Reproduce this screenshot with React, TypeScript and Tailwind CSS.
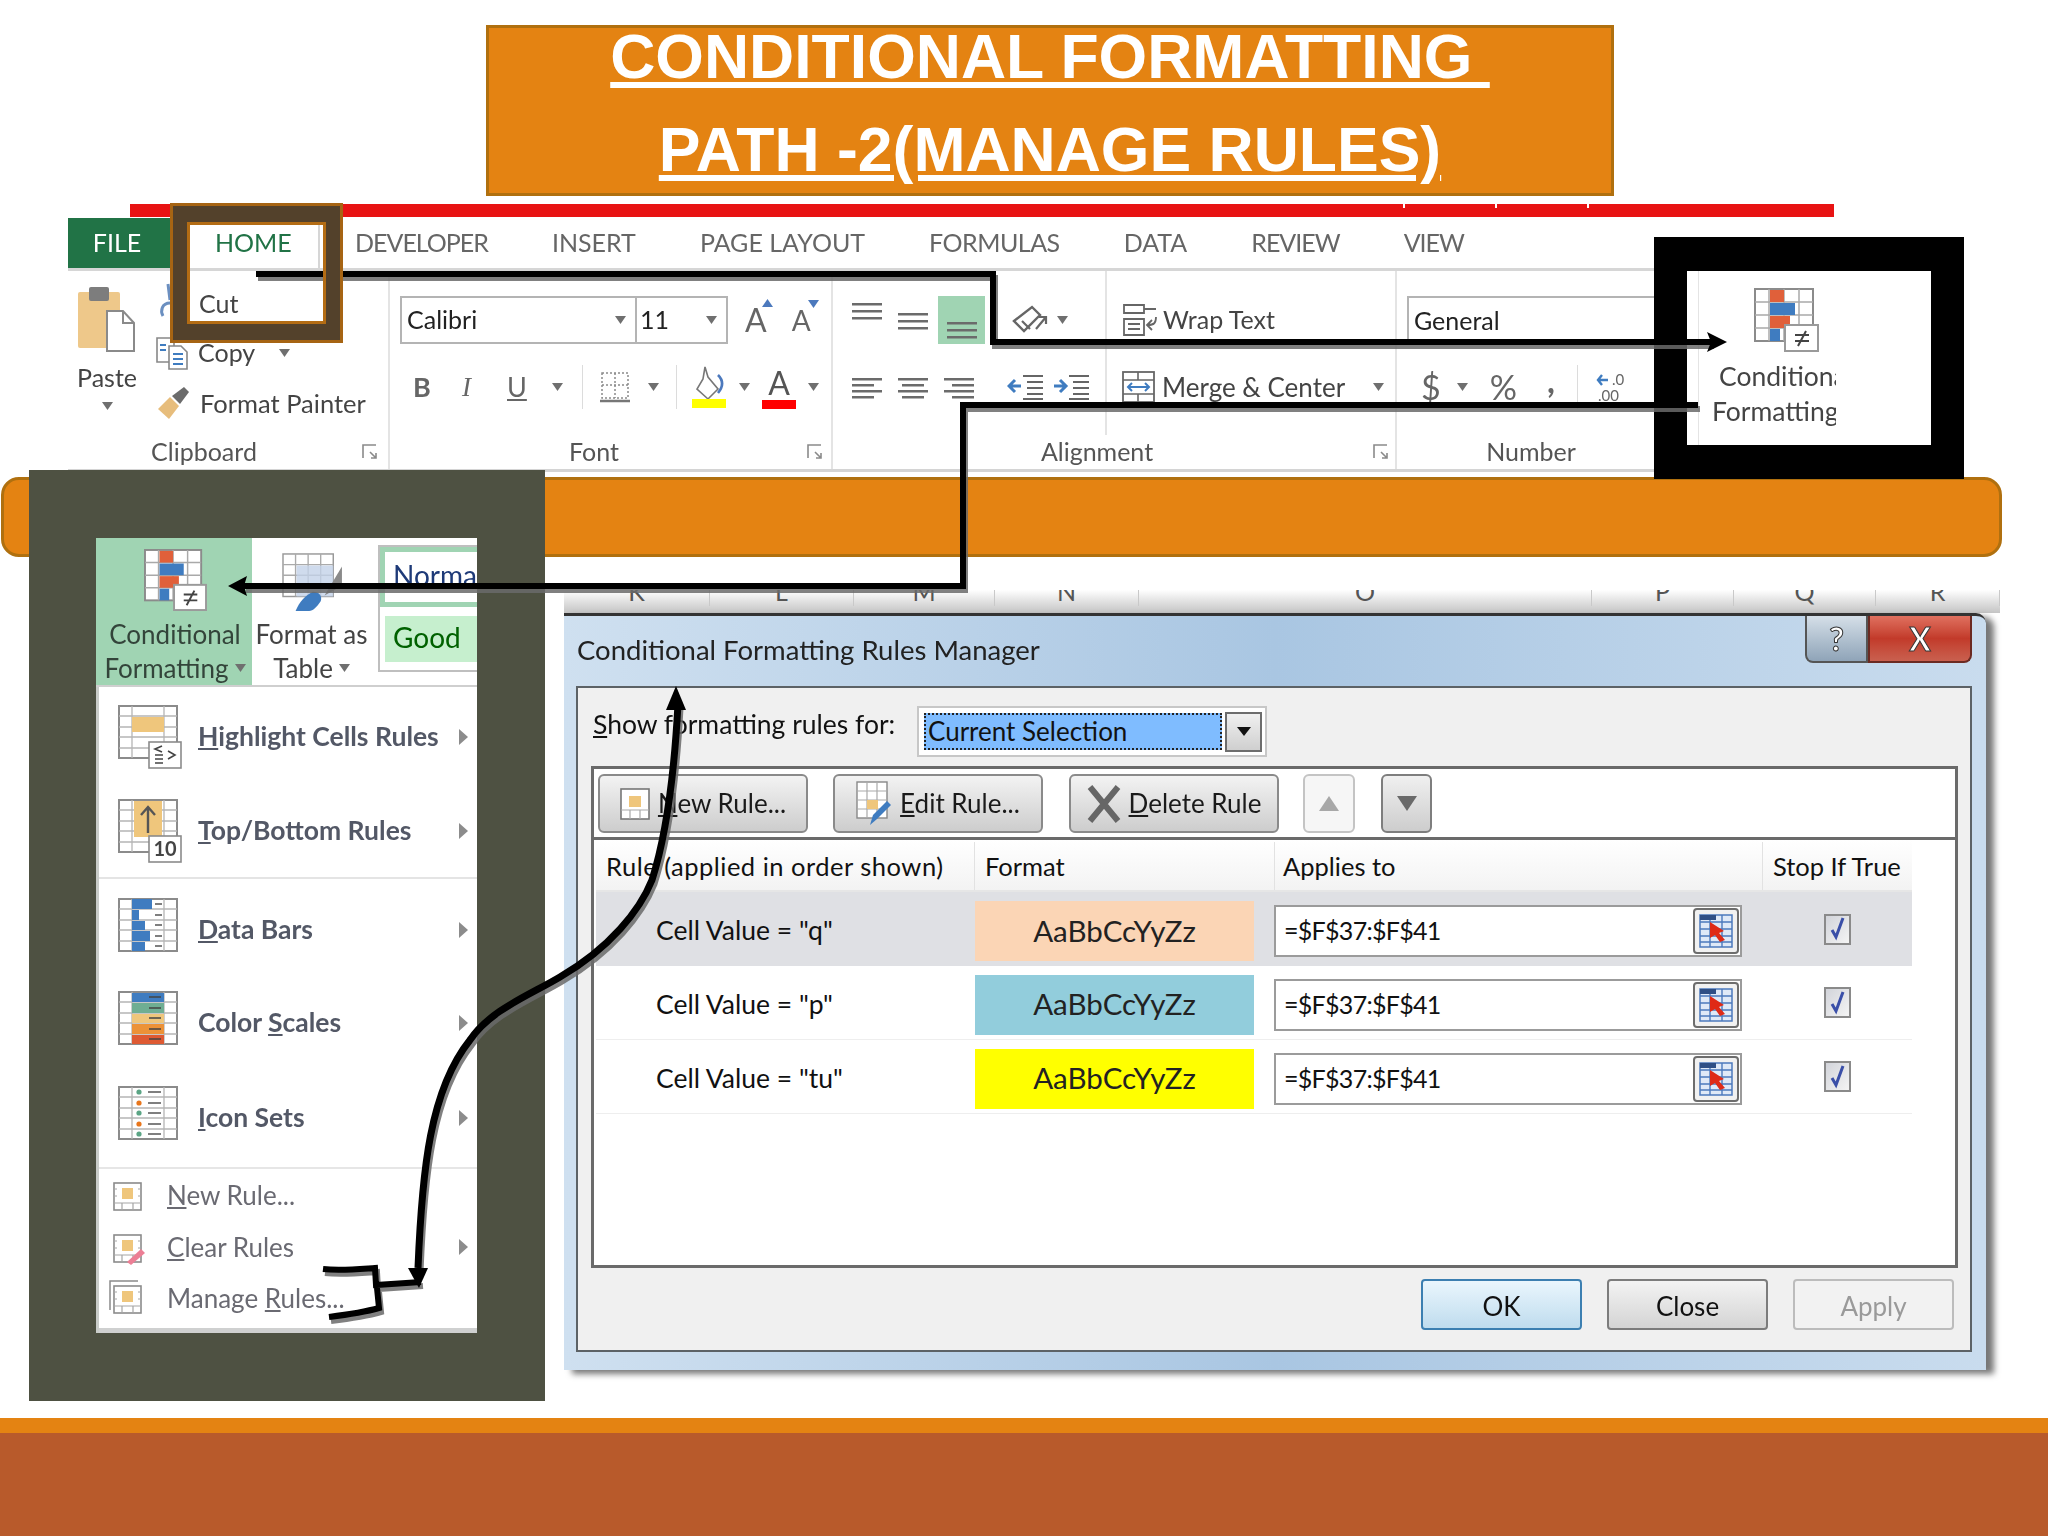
import type { ReactNode } from 'react'

const Tri = ({ className = '' }: { className?: string }) => (
  <svg width="11" height="8" viewBox="0 0 11 8" className={className}>
    <path d="M0 0h11L5.5 8z" fill="#6f6f6f" />
  </svg>
)

const SubArrow = () => (
  <svg width="9" height="16" viewBox="0 0 9 16" className="ml-auto mr-[9px] shrink-0">
    <path d="M0 0l9 8-9 8z" fill="#8c8c8c" />
  </svg>
)

const Launcher = ({ className = '' }: { className?: string }) => (
  <svg width="16" height="16" viewBox="0 0 16 16" className={className}>
    <path d="M1 14V1h13M8 8l6 6M9 14h5V9" fill="none" stroke="#8a8a8a" strokeWidth="1.6" />
  </svg>
)

// three or more short bars, used by all alignment buttons
const Lines = ({ rows, width = 30 }: { rows: [number, number, number][]; width?: number }) => (
  <svg width={width} height="30" viewBox={`0 0 ${width} 30`}>
    {rows.map(([x, y, w], i) => (
      <rect key={i} x={x} y={y} width={w} height="2.5" fill="#6b6b6b" />
    ))}
  </svg>
)

const CfIcon = () => (
  <svg width="65" height="64" viewBox="0 0 65 64">
    <rect x="1" y="1" width="58" height="52" fill="#fff" stroke="#8b8b8b" strokeWidth="2" />
    <path d="M15 1v52M30 1v52M45 1v52M1 14h58M1 27h58M1 40h58" stroke="#a9a9a9" strokeWidth="1.5" />
    <rect x="16" y="2" width="14" height="12" fill="#e0603a" />
    <rect x="16" y="15" width="25" height="12" fill="#3f7cc0" />
    <rect x="16" y="28" width="20" height="12" fill="#e0603a" />
    <rect x="16" y="41" width="10" height="12" fill="#3f7cc0" />
    <rect x="31" y="37" width="33" height="26" fill="#fff" stroke="#9a9a9a" strokeWidth="2" />
    <path d="M41 47h14M41 53h14M52 43l-8 15" stroke="#444" strokeWidth="2" fill="none" />
  </svg>
)

const GridBase = ({ children }: { children?: ReactNode }) => (
  <>
    <rect x="1" y="1" width="58" height="52" fill="#fff" stroke="#8b8b8b" strokeWidth="2" />
    <path d="M14 1v52M46 1v52M1 11h58M1 22h58M1 32h58M1 43h58" stroke="#b5b5b5" strokeWidth="1.3" />
    {children}
  </>
)

const MenuIcon = ({ kind }: { kind: string }) => (
  <svg width="64" height="64" viewBox="0 0 64 64" className="shrink-0">
    {kind === 'highlight' && (
      <GridBase>
        <rect x="14" y="12" width="32" height="15" fill="#efc67c" />
        <rect x="31" y="37" width="32" height="26" fill="#fff" stroke="#8b8b8b" strokeWidth="1.6" />
        <path d="M44 41l-7 3 7 3M37 50h8M37 54h8M37 58h8M50 46l7 4-7 4" fill="none" stroke="#444" strokeWidth="1.6" />
      </GridBase>
    )}
    {kind === 'top' && (
      <GridBase>
        <rect x="16" y="2" width="28" height="36" fill="#efc67c" />
        <path d="M30 34V8M23 16l7-8 7 8" stroke="#555" strokeWidth="2.4" fill="none" />
        <rect x="31" y="37" width="32" height="26" fill="#fff" stroke="#8b8b8b" strokeWidth="1.6" />
        <text x="47" y="57" textAnchor="middle" fontSize="20" fill="#444">10</text>
      </GridBase>
    )}
    {kind === 'bars' && (
      <GridBase>
        <rect x="14" y="1" width="20" height="10" fill="#3f7cc0" />
        <rect x="14" y="12" width="7" height="10" fill="#3f7cc0" />
        <rect x="14" y="23" width="13" height="9" fill="#3f7cc0" />
        <rect x="14" y="33" width="18" height="10" fill="#3f7cc0" />
        <rect x="14" y="44" width="13" height="9" fill="#3f7cc0" />
        <path d="M37 6h7M37 17h7M37 27h7M37 38h7M37 48h7" stroke="#555" strokeWidth="1.6" />
      </GridBase>
    )}
    {kind === 'scales' && (
      <GridBase>
        <rect x="14" y="2" width="32" height="9" fill="#3f7cc0" />
        <rect x="14" y="12" width="32" height="10" fill="#6fae93" />
        <rect x="14" y="23" width="32" height="9" fill="#efc67c" />
        <rect x="14" y="33" width="32" height="10" fill="#ec9238" />
        <rect x="14" y="44" width="32" height="9" fill="#de5a33" />
        <path d="M31 6h12M31 17h12M31 27h12M31 38h12M31 48h12" stroke="#444" strokeWidth="1.6" />
      </GridBase>
    )}
    {kind === 'sets' && (
      <GridBase>
        <circle cx="21" cy="6" r="2.6" fill="#5ba585" />
        <circle cx="21" cy="17" r="2.6" fill="#e8761c" />
        <circle cx="21" cy="27" r="2.6" fill="#5ba585" />
        <circle cx="21" cy="38" r="2.6" fill="#e8761c" />
        <circle cx="21" cy="48" r="2.6" fill="#5ba585" />
        <path d="M30 6h13M30 17h13M30 27h13M30 38h13M30 48h13" stroke="#555" strokeWidth="1.6" />
      </GridBase>
    )}
  </svg>
)

const SmallRuleIcon = ({ kind = 'new' }: { kind?: string }) => (
  <svg width="36" height="36" viewBox="0 0 36 36" className="shrink-0">
    {kind === 'manage' && <path d="M1 30V1h28" fill="none" stroke="#8b8b8b" strokeWidth="1.5" />}
    <rect x="5" y="6" width="27" height="27" fill="#fff" stroke="#8b8b8b" strokeWidth="1.6" />
    <path d="M5 26h27M13 26v7M24 26v7M5 12h3M29 12h3M5 19h3M29 19h3" stroke="#a5a5a5" strokeWidth="1.2" />
    <rect x="13" y="11" width="11" height="11" fill="#efc67c" />
    {kind === 'clear' && <path d="M18 33l14-13 4 4-14 12z" fill="#ec7f95" />}
  </svg>
)

const RangeButton = () => (
  <div className="flex h-[46px] w-[46px] shrink-0 items-center justify-center rounded-[4px] border-2 border-[#6d6d6d] bg-[#f1f1f1]">
    <svg width="34" height="34" viewBox="0 0 34 34">
      <rect x="1" y="1" width="32" height="32" fill="#dfe9f7" stroke="#4c79bd" strokeWidth="1.5" />
      <path d="M1 8h32M1 15h32M1 22h32M1 28h32M11 1v32M23 1v32" stroke="#4c79bd" strokeWidth="1.4" />
      <rect x="1" y="1" width="16" height="5" fill="#2f4f85" />
      <path d="M11 8l14 9-5 2 6 7-5 2-5-7-5 3z" fill="#df2a16" />
    </svg>
  </div>
)

const Check = () => (
  <div className="-mt-[4px] flex h-[31px] w-[27px] items-center justify-center border-2 border-[#8a8a8a] bg-gradient-to-br from-[#d2d4da] to-[#f4f4f4]">
    <svg width="19" height="26" viewBox="0 0 19 26">
      <path d="M4 14l4 7L15 2" fill="none" stroke="#3a4fa8" strokeWidth="3" />
    </svg>
  </div>
)

const DlgButton = ({ children, icon }: { children: ReactNode; icon: ReactNode }) => (
  <div className="flex h-[59px] w-[210px] items-center justify-center gap-[8px] rounded-[6px] border-2 border-[#8a8a8a] bg-gradient-to-b from-[#f3f3f3] to-[#cdcdcd] text-[26px] text-[#1a1a1a]">
    {icon}
    <span>{children}</span>
  </div>
)

const FootButton = ({ label, tone }: { label: string; tone: string }) => (
  <div
    className={
      tone === 'ok'
        ? 'flex h-[51px] w-[161px] items-center justify-center rounded-[4px] border-2 border-[#3c7fb1] bg-gradient-to-b from-[#eaf6fd] to-[#bfdcee] pt-[3px] text-[26px] text-[#111]'
        : tone === 'off'
          ? 'flex h-[51px] w-[161px] items-center justify-center rounded-[4px] border-2 border-[#bcbcbc] bg-[#f2f2f2] pt-[3px] text-[26px] text-[#9a9a9a]'
          : 'flex h-[51px] w-[161px] items-center justify-center rounded-[4px] border-2 border-[#7c7c7c] bg-gradient-to-b from-[#f3f3f3] to-[#d4d4d4] pt-[3px] text-[26px] text-[#111]'
    }
  >
    {label}
  </div>
)

// Calibri's capitals run at different widths from Lato's, so each tab gets its own tracking
const tabs: [string, string][] = [
  ['DEVELOPER', 'tracking-[-1px]'],
  ['INSERT', 'tracking-[0px]'],
  ['PAGE LAYOUT', 'tracking-[0px]'],
  ['FORMULAS', 'tracking-[-0.5px]'],
  ['DATA', 'tracking-[0px]'],
  ['REVIEW', 'tracking-[-1px]'],
  ['VIEW', 'tracking-[-1px]'],
]

const Ribbon = () => (
  <div className="absolute left-[68px] top-[217px] flex h-[258px] w-[1600px] flex-col text-[25px] text-[#444] blur-[0.5px]">
    <div className="flex h-[54px] shrink-0 border-b-[3px] border-[#d6d6d6] pt-[1px]">
      <div className="flex w-[108px] items-center justify-center bg-[#217346] pr-[10px] text-white">FILE</div>
      <div className="flex w-[144px] items-center border-r-2 border-[#d6d6d6] pl-[39px] text-[#217346]">HOME</div>
      <div className="flex items-center gap-[64px] pl-[35px] text-[#666]">
        {tabs.map(([t, tr]) => (
          <span key={t} className={tr}>{t}</span>
        ))}
      </div>
    </div>
    <div className="flex h-[201px] border-b-[3px] border-[#d4d4d4]">
      {/* clipboard */}
      <div className="flex w-[322px] shrink-0 flex-col border-r-2 border-[#e4e4e4]">
        <div className="flex h-[164px] pt-[14px]">
          <div className="mr-[10px] flex w-[78px] flex-col items-center">
            <svg width="60" height="68" viewBox="0 0 60 68">
              <rect x="1" y="7" width="42" height="56" rx="2" fill="#eec88a" />
              <rect x="12" y="2" width="20" height="14" rx="2" fill="#7d7d7d" />
              <path d="M30 26h16l11 12v28H30z" fill="#fff" stroke="#8a8a8a" strokeWidth="2" />
              <path d="M46 26v12h11" fill="none" stroke="#8a8a8a" strokeWidth="2" />
            </svg>
            <span className="mt-[9px] leading-[30px]">Paste</span>
            <Tri className="mt-[10px]" />
          </div>
          <div className="-mt-[6px] flex flex-col">
            <div className="flex h-[50px] items-center pl-[43px]">Cut</div>
            <div className="-mt-[1px] flex h-[50px] items-center gap-[9px]">
              <svg width="34" height="34" viewBox="0 0 34 34" className="-ml-[1px]">
                <path d="M2 2h14l3 4v20H2z" fill="#fff" stroke="#888" strokeWidth="1.6" />
                <path d="M14 10h12l6 6v17H14z" fill="#fff" stroke="#888" strokeWidth="1.6" />
                <path d="M18 18h10M18 23h10M18 28h10M5 9h6M5 14h6" stroke="#3f7cc0" strokeWidth="2" />
              </svg>
              <span>Copy</span>
              <Tri className="ml-[15px]" />
            </div>
            <div className="flex h-[50px] items-center gap-[8px]">
              <svg width="36" height="36" viewBox="0 0 36 36">
                <path d="M2 24l12-12 9 9-10 13z" fill="#e7bd7c" />
                <path d="M16 11l12-9 5 5-9 12z" fill="#6b6b6b" />
              </svg>
              <span className="text-[25.5px]">Format Painter</span>
            </div>
          </div>
        </div>
        <div className="flex h-[33px] items-center pt-[1px]">
          <span className="w-[272px] text-center text-[#555]">Clipboard</span>
          <Launcher className="ml-[22px]" />
        </div>
      </div>
      {/* font */}
      <div className="flex w-[443px] shrink-0 flex-col border-r-2 border-[#e4e4e4]">
        <div className="flex h-[164px] flex-col pl-[10px] pt-[25px]">
          <div className="flex items-center">
            <div className="flex h-[48px] w-[237px] items-center justify-between border-2 border-[#b4b4b4] pl-[5px] pr-[9px] text-[#222]">
              Calibri
              <Tri />
            </div>
            <div className="-ml-[2px] flex h-[48px] w-[93px] items-center justify-between border-2 border-[#b4b4b4] pl-[3px] pr-[9px] text-[#222]">
              11
              <Tri />
            </div>
            <span className="relative ml-[17px] text-[32px] leading-none text-[#666]">
              A
              <svg width="11" height="8" viewBox="0 0 11 8" className="absolute -right-[6px] -top-[5px]">
                <path d="M5.5 0L11 8H0z" fill="#4c79bd" />
              </svg>
            </span>
            <span className="relative ml-[25px] text-[28px] leading-none text-[#666]">
              A
              <svg width="11" height="8" viewBox="0 0 11 8" className="absolute -right-[8px] -top-[6px]">
                <path d="M0 0h11L5.5 8z" fill="#4c79bd" />
              </svg>
            </span>
          </div>
          <div className="mt-[25px] flex h-[36px] items-center pl-[13px] text-[#666]">
            <b className="w-[47px] text-[27px]">B</b>
            <i className="w-[47px] pl-[2px] text-[27px] [font-family:'Liberation_Serif',serif]">I</i>
            <u className="w-[45px] text-[27px]">U</u>
            <Tri />
            <div className="ml-[19px] h-[44px] w-px bg-[#dcdcdc]" />
            <svg width="30" height="32" viewBox="0 0 30 32" className="ml-[17px]">
              <rect x="2" y="2" width="26" height="25" fill="none" stroke="#8a8a8a" strokeWidth="1.5" strokeDasharray="2 2" />
              <path d="M15 2v25M2 14h26" stroke="#8a8a8a" strokeWidth="1.5" strokeDasharray="2 2" />
              <path d="M0 30h30" stroke="#777" strokeWidth="2.5" />
            </svg>
            <Tri className="ml-[18px]" />
            <div className="ml-[17px] h-[44px] w-px bg-[#dcdcdc]" />
            <svg width="36" height="44" viewBox="0 0 36 44" className="ml-[14px]">
              <path d="M14 2l3 10 10 12-10 10L6 24l6-10z" fill="#fff" stroke="#777" strokeWidth="1.6" />
              <path d="M27 10c6 6 5 12 0 18" fill="none" stroke="#4c79bd" strokeWidth="2.6" />
              <rect x="1" y="34" width="34" height="9" fill="#ffff00" />
            </svg>
            <Tri className="ml-[12px]" />
            <div className="ml-[12px] flex w-[34px] flex-col items-center">
              <span className="text-[32px] leading-[34px] text-[#555]">A</span>
              <div className="h-[9px] w-full bg-[#ff0000]" />
            </div>
            <Tri className="ml-[12px]" />
          </div>
        </div>
        <div className="flex h-[33px] items-center pt-[1px]">
          <span className="w-[408px] text-center text-[#555]">Font</span>
          <Launcher className="ml-[9px]" />
        </div>
      </div>
      {/* alignment */}
      <div className="flex w-[564px] shrink-0 flex-col border-r-2 border-[#e4e4e4]">
        <div className="flex h-[164px]">
          <div className="flex w-[274px] flex-col border-r-2 border-[#e4e4e4] pl-[19px] pt-[25px]">
            <div className="flex h-[48px] items-center">
              <div className="-mt-[7px]">
                <Lines rows={[[0, 1, 30], [0, 8, 30], [0, 15, 30]]} />
              </div>
              <div className="-mt-[4px] ml-[16px]">
                <Lines rows={[[0, 10, 30], [0, 17, 30], [0, 24, 30]]} />
              </div>
              <div className="ml-[10px] flex h-[48px] w-[47px] items-end justify-center bg-[#a0d4b3] pb-[4px]">
                <Lines rows={[[0, 12, 30], [0, 19, 30], [0, 26, 30]]} />
              </div>
              <svg width="36" height="34" viewBox="0 0 36 34" className="ml-[27px]">
                <path d="M2 18L20 4l8 8-16 16z" fill="none" stroke="#666" strokeWidth="2.4" />
                <path d="M10 18l8 8M24 26l10-12m-7 0h7v7" fill="none" stroke="#666" strokeWidth="2.2" />
              </svg>
              <Tri className="ml-[9px]" />
            </div>
            <div className="mt-[25px] flex h-[36px] items-center">
              <Lines rows={[[0, 6, 30], [0, 12, 22], [0, 18, 30], [0, 24, 22]]} />
              <div className="ml-[16px]">
                <Lines rows={[[0, 6, 30], [4, 12, 22], [0, 18, 30], [4, 24, 22]]} />
              </div>
              <div className="ml-[16px]">
                <Lines rows={[[0, 6, 30], [8, 12, 22], [0, 18, 30], [8, 24, 22]]} />
              </div>
              <svg width="36" height="28" viewBox="0 0 36 28" className="ml-[33px]">
                <path d="M16 3h20M20 9h16M20 15h16M20 21h16M16 26h20" stroke="#666" strokeWidth="2.2" />
                <path d="M14 13H2m6-6l-6 6 6 6" fill="none" stroke="#3f7cc0" strokeWidth="3" />
              </svg>
              <svg width="36" height="28" viewBox="0 0 36 28" className="ml-[10px]">
                <path d="M16 3h20M20 9h16M20 15h16M20 21h16M16 26h20" stroke="#666" strokeWidth="2.2" />
                <path d="M1 13h12m-6-6l6 6-6 6" fill="none" stroke="#3f7cc0" strokeWidth="3" />
              </svg>
            </div>
          </div>
          <div className="flex flex-col pl-[15px] pt-[25px]">
            <div className="flex h-[48px] items-center gap-[5px]">
              <svg width="36" height="34" viewBox="0 0 36 34">
                <path d="M2 2h20v8H2zM2 16h20v16H2zM6 21h12M6 26h12M22 6h12M34 14c0 6-2 8-8 8m4-5l-5 5 5 5" fill="none" stroke="#666" strokeWidth="1.8" />
              </svg>
              <span>Wrap Text</span>
            </div>
            <div className="mt-[25px] flex h-[36px] items-center gap-[7px]">
              <svg width="33" height="32" viewBox="0 0 33 32">
                <rect x="1" y="1" width="31" height="30" fill="none" stroke="#666" strokeWidth="1.8" />
                <path d="M1 9h31M1 23h31M16 1v8M16 23v8" stroke="#666" strokeWidth="1.6" />
                <path d="M6 16h21M10 12l-4 4 4 4M23 12l4 4-4 4" fill="none" stroke="#3f7cc0" strokeWidth="2" />
              </svg>
              <span className="text-[26px]">Merge &amp; Center</span>
              <Tri className="ml-[21px]" />
            </div>
          </div>
        </div>
        <div className="flex h-[33px] items-center pt-[1px]">
          <span className="w-[528px] text-center text-[#555]">Alignment</span>
          <Launcher className="ml-[12px]" />
        </div>
      </div>
      {/* number */}
      <div className="flex w-[272px] shrink-0 flex-col">
        <div className="flex h-[164px] flex-col pl-[10px] pt-[25px]">
          <div className="flex h-[48px] w-[262px] items-center border-2 border-b-0 border-r-0 border-[#b4b4b4] pl-[5px] text-[#222]">General</div>
          <div className="mt-[25px] flex h-[36px] items-center pl-[14px] text-[#666]">
            <span className="text-[34px] leading-none">$</span>
            <Tri className="ml-[16px]" />
            <span className="ml-[22px] text-[34px] leading-none">%</span>
            <span className="-mt-[14px] ml-[30px] text-[34px] font-bold leading-none">,</span>
            <div className="ml-[22px] h-[44px] w-px bg-[#dcdcdc]" />
            <svg width="32" height="32" viewBox="0 0 32 32" className="ml-[18px]">
              <path d="M12 9H2m4-5L2 9l4 5" fill="none" stroke="#3f7cc0" strokeWidth="2.4" />
              <text x="16" y="14" fontSize="15" fill="#666">.0</text>
              <text x="2" y="30" fontSize="15" fill="#666">.00</text>
            </svg>
          </div>
        </div>
        <div className="flex h-[33px] items-center pt-[1px]">
          <span className="w-[268px] text-center text-[#555]">Number</span>
        </div>
      </div>
    </div>
  </div>
)

const colHeads: [string, string][] = [
  ['K', 'w-[146px]'],
  ['L', 'w-[144px]'],
  ['M', 'w-[141px]'],
  ['N', 'w-[144px]'],
  ['O', 'w-[453px]'],
  ['P', 'w-[142px]'],
  ['Q', 'w-[142px]'],
  ['R', 'w-[124px]'],
]

const rules = [
  { label: 'Cell Value = "q"', color: 'bg-[#fbd5b5]', row: 'bg-[#dfe0e4]' },
  { label: 'Cell Value = "p"', color: 'bg-[#92cddc]', row: 'bg-white border-b border-[#eeeeee]' },
  { label: 'Cell Value = "tu"', color: 'bg-[#ffff00]', row: 'bg-white border-b border-[#eeeeee]' },
]

const Dialog = () => (
  <div className="absolute left-[564px] top-[590px] h-[786px] w-[1436px] text-[25px] text-[#111] blur-[0.5px]">
    <div className="flex h-[23px] overflow-hidden bg-gradient-to-b from-white to-[#c4c4c4] text-[#555]">
      {colHeads.map(([c, w]) => (
        <div key={c} className={`flex h-[16px] items-end justify-center overflow-hidden border-r border-[#c9c9c9] ${w}`}>
          <span className="leading-[30px]">{c}</span>
        </div>
      ))}
    </div>
    <div className="flex h-[757px] w-[1422px] flex-col rounded-tr-[10px] border-t-[3px] border-[#333] bg-gradient-to-r from-[#cfe0f0] via-[#a9c6e2] to-[#c9dcee] shadow-[8px_4px_6px_#777]">
      <div className="flex h-[70px] shrink-0 items-start pl-[13px]">
        <span className="pt-[17px] text-[27.5px] leading-[34px] text-[#222]">Conditional Formatting Rules Manager</span>
        <div className="ml-auto mr-[14px] flex h-[47px]">
          <div className="flex w-[63px] items-center justify-center rounded-bl-[8px] border-2 border-t-0 border-[#555] bg-gradient-to-b from-[#d5dfe8] to-[#8fa4b8] text-[32px] font-bold text-white [-webkit-text-stroke:1px_#333]">?</div>
          <div className="flex w-[104px] items-center justify-center rounded-br-[8px] border-2 border-t-0 border-[#6b2a22] bg-gradient-to-b from-[#e0705f] via-[#c23a2a] to-[#c9604f] text-[32px] font-bold text-white [-webkit-text-stroke:1px_#333]">X</div>
        </div>
      </div>
      <div className="ml-[12px] mr-[14px] flex h-[666px] flex-col border-2 border-[#5c6266] bg-[#f0f0f0] pl-[13px]">
        <div className="flex h-[51px] shrink-0 translate-y-[18px] items-center">
          <span className="w-[326px] -translate-y-[7px] whitespace-nowrap pl-[2px] text-[26.5px]">
            <u>S</u>how formatting rules for:
          </span>
          <div className="flex h-[51px] w-[350px] items-center border-2 border-[#c7c7c7] bg-white pl-[5px] pr-[3px] text-[26px]">
            <div className="flex h-[37px] w-[299px] items-center border-2 border-dotted border-[#222] bg-[#7fbcff] pl-[2px]">Current Selection</div>
            <div className="ml-[3px] flex h-[40px] w-[37px] items-center justify-center border-2 border-[#6d6d6d] bg-gradient-to-b from-[#f0f0f0] to-[#cfcfcf]">
              <svg width="14" height="9" viewBox="0 0 14 9"><path d="M0 0h14L7 9z" fill="#111" /></svg>
            </div>
          </div>
        </div>
        <div className="mt-[27px] flex h-[502px] w-[1367px] shrink-0 flex-col border-[3px] border-[#6a6a6a] bg-white">
          <div className="flex h-[71px] shrink-0 items-start border-b-[3px] border-[#6a6a6a] pl-[4px] pt-[5px]">
            <DlgButton
              icon={
                <svg width="30" height="32" viewBox="0 0 30 32">
                  <rect x="1" y="1" width="28" height="30" fill="#fff" stroke="#777" strokeWidth="1.6" />
                  <path d="M1 22h28M10 22v9M20 22v9" stroke="#aaa" strokeWidth="1.2" />
                  <rect x="9" y="8" width="12" height="11" fill="#efc67c" />
                </svg>
              }
            >
              <u>N</u>ew Rule...
            </DlgButton>
            <div className="ml-[25px]">
              <DlgButton
                icon={
                  <svg width="36" height="46" viewBox="0 0 36 46">
                    <rect x="1" y="1" width="30" height="36" fill="#fff" stroke="#888" strokeWidth="1.4" />
                    <path d="M11 1v36M21 1v36M1 10h30M1 19h30M1 28h30" stroke="#aaa" strokeWidth="1.2" />
                    <rect x="11" y="19" width="11" height="9" fill="#efc67c" />
                    <path d="M14 44l3-10 14-14 4 4-14 14z" fill="#3f7cc0" />
                  </svg>
                }
              >
                <u>E</u>dit Rule...
              </DlgButton>
            </div>
            <div className="ml-[26px]">
              <DlgButton
                icon={
                  <svg width="34" height="38" viewBox="0 0 34 38">
                    <path d="M3 2l28 34M31 2L3 36" stroke="#666" strokeWidth="6" />
                  </svg>
                }
              >
                <u>D</u>elete Rule
              </DlgButton>
            </div>
            <div className="ml-[24px] flex h-[59px] w-[52px] items-center justify-center rounded-[6px] border-2 border-[#c4c4c4] bg-[#f6f6f6]">
              <svg width="20" height="15" viewBox="0 0 20 15"><path d="M10 0l10 15H0z" fill="#a8a8a8" /></svg>
            </div>
            <div className="ml-[26px] flex h-[59px] w-[51px] items-center justify-center rounded-[6px] border-2 border-[#7e7e7e] bg-gradient-to-b from-[#f0f0f0] to-[#cdcdcd]">
              <svg width="20" height="15" viewBox="0 0 20 15"><path d="M0 0h20L10 15z" fill="#6a6a6a" /></svg>
            </div>
          </div>
          <div className="ml-[2px] w-[1316px]">
            <div className="grid h-[52px] grid-cols-[378px_300px_488px_150px] items-center border-b-2 border-[#e6e6e6] bg-gradient-to-b from-white to-[#f3f3f3] pt-[2px] text-[25.5px]">
              <span className="whitespace-nowrap pl-[10px] tracking-[0.5px]">Rule (applied in order shown)</span>
              <span className="flex h-full items-center border-l border-[#e2e2e2] pl-[10px]">Format</span>
              <span className="flex h-full items-center border-l border-[#e2e2e2] pl-[8px]">Applies to</span>
              <span className="flex h-full items-center whitespace-nowrap border-l border-[#e2e2e2] pl-[10px]">Stop If True</span>
            </div>
            {rules.map(r => (
              <div key={r.label} className={`grid h-[74px] grid-cols-[378px_300px_488px_150px] items-center pt-[4px] ${r.row}`}>
                <span className="pl-[60px] text-[26.5px]">{r.label}</span>
                <div className="ml-[1px] flex h-[60px] w-[279px] items-center justify-center text-[29.5px] text-[#222]">
                  <div className={`flex h-full w-full items-center justify-center ${r.color}`}>AaBbCcYyZz</div>
                </div>
                <div className="flex h-[52px] w-[468px] items-center justify-between border-2 border-[#9b9b9b] bg-white pl-[8px] pr-[1px] tracking-[-0.7px]">
                  =$F$37:$F$41
                  <RangeButton />
                </div>
                <div className="flex justify-center">
                  <Check />
                </div>
              </div>
            ))}
          </div>
        </div>
        <div className="flex justify-end gap-[25px] pr-[16px] pt-[11px]">
          <FootButton label="OK" tone="ok" />
          <FootButton label="Close" tone="plain" />
          <FootButton label="Apply" tone="off" />
        </div>
      </div>
    </div>
  </div>
)

const menuItems = [
  { kind: 'highlight', label: <><u>H</u>ighlight Cells Rules</>, h: 'h-[95px]' },
  { kind: 'top', label: <><u>T</u>op/Bottom Rules</>, h: 'h-[95px] border-b-2 border-[#e4e4e4]' },
  { kind: 'bars', label: <><u>D</u>ata Bars</>, h: 'mt-[3px] h-[96px]' },
  { kind: 'scales', label: <>Color <u>S</u>cales</>, h: 'h-[90px]' },
  { kind: 'sets', label: <><u>I</u>con Sets</>, h: 'h-[99px]' },
]

const FormatMenu = () => (
  <div className="absolute left-[29px] top-[470px] h-[931px] w-[516px] bg-[#4e5142] pl-[67px] pt-[68px]">
    <div className="flex h-[795px] w-[381px] flex-col bg-white text-[26px] text-[#444] blur-[0.4px]">
      <div className="flex h-[149px] shrink-0 border-b-2 border-[#cfcfcf]">
        <div className="flex w-[156px] flex-col items-center bg-[#a0d4b3] pl-[2px] pt-[11px] text-[#33443a]">
          <CfIcon />
          <span className="mt-[6px] leading-[34px]">Conditional</span>
          <span className="flex items-center gap-[6px] leading-[34px]">
            Formatting
            <Tri />
          </span>
        </div>
        <div className="flex w-[126px] flex-col items-center pr-[7px] pt-[15px]">
          <svg width="62" height="60" viewBox="0 0 62 60">
            <rect x="1" y="1" width="52" height="44" fill="#fff" stroke="#999" strokeWidth="1.5" />
            <path d="M14 1v44M27 1v44M40 1v44M1 12h52M1 23h52M1 34h52" stroke="#aaa" strokeWidth="1.4" />
            <rect x="15" y="13" width="38" height="32" fill="#c3d2e8" opacity="0.8" />
            <path d="M62 14v20L44 44z" fill="#8a8a8a" />
            <path d="M14 60c4-10 10-16 18-20 6 0 10 4 8 10-4 6-8 10-12 10z" fill="#3f7cc0" />
          </svg>
          <span className="mt-[6px] leading-[34px]">Format as</span>
          <span className="flex items-center gap-[6px] leading-[34px]">
            Table
            <Tri />
          </span>
        </div>
        <div className="mt-[7px] h-[127px] flex-1 overflow-hidden border-2 border-r-0 border-[#bfbfbf]">
          <div className="h-[60px] border-[5px] border-r-0 border-[#a0d4b3] pl-[8px] text-[28px] leading-[47px] text-[#1e3a78]">Normal</div>
          <div className="ml-[5px] mt-[9px] h-[46px] w-[92px] bg-[#c6efce] pl-[8px] text-[28px] leading-[42px] text-[#006100]">Good</div>
        </div>
      </div>
      <div className="flex flex-1 flex-col border-l-[3px] border-[#c9ccc9] pt-[2px]">
        {menuItems.map(m => (
          <div key={m.kind} className={`flex shrink-0 items-center pl-[19px] text-[26.5px] font-bold text-[#535866] ${m.h}`}>
            <MenuIcon kind={m.kind} />
            <span className="ml-[16px]">{m.label}</span>
            <SubArrow />
          </div>
        ))}
        <div className="h-[2px] shrink-0 bg-[#e6e6e6]" />
        <div className="flex h-[52px] shrink-0 items-center pl-[10px] text-[#6a6a72]">
          <SmallRuleIcon />
          <span className="ml-[22px]"><u>N</u>ew Rule...</span>
        </div>
        <div className="flex h-[52px] shrink-0 items-center pl-[10px] text-[#6a6a72]">
          <SmallRuleIcon kind="clear" />
          <span className="ml-[22px]"><u>C</u>lear Rules</span>
          <SubArrow />
        </div>
        <div className="flex h-[50px] shrink-0 items-center pl-[10px] text-[#6a6a72]">
          <SmallRuleIcon kind="manage" />
          <span className="ml-[22px]">Manage <u>R</u>ules...</span>
        </div>
        <div className="mt-auto h-[5px] bg-[#cfd0d0]" />
      </div>
    </div>
  </div>
)

const Arrows = () => {
  const elbowA = 'M256 274H993V342H1712'
  const elbowB = 'M1698 405H963V586H244'
  const curve = 'M418 1268C422 1170 430 1090 470 1040C490 1010 530 995 560 977C610 948 640 910 652 880C668 830 675 760 678 704'
  const brace = 'M323 1269C340 1271 360 1269 375 1268L376 1285L421 1282M329 1317C345 1315 365 1312 379 1308L377 1288'
  return (
    <svg className="absolute left-0 top-0" width="2048" height="1536" viewBox="0 0 2048 1536" fill="none">
      <g stroke="#6a6a6a" strokeWidth="6" opacity="0.85" transform="translate(2 4)">
        <path d={elbowA} />
        <path d={elbowB} />
        <path d={curve} strokeWidth="7" />
        <path d={brace} />
      </g>
      <g stroke="#000" strokeWidth="6">
        <path d={elbowA} />
        <path d={elbowB} />
        <path d={curve} strokeWidth="7" />
        <path d={brace} />
      </g>
      <path d="M1707 332l20 10-20 10 4-10z" fill="#000" />
      <path d="M228 586l19-10-3 10 3 10z" fill="#000" />
      <path d="M408 1268h20l-9 20z" fill="#000" />
      <path d="M676 686l-10 24h20z" fill="#000" />
    </svg>
  )
}

export default function App() {
  return (
    <div className="relative h-[1536px] w-[2048px] overflow-hidden bg-white [font-family:Lato,sans-serif]">
      {/* title */}
      <div className="absolute left-[486px] top-[25px] h-[171px] w-[1128px] border-[3px] border-[#b0700f] bg-[#e48312] text-center text-[62.5px] font-bold leading-[93px] text-white [font-family:'Liberation_Sans',sans-serif]">
        <div className="-mt-[18px] whitespace-pre underline">CONDITIONAL FORMATTING </div>
        <div className="underline">PATH -2(MANAGE RULES)</div>
      </div>
      <div className="absolute left-[130px] top-[204px] flex h-[13px] w-[1704px] gap-[90px] bg-[#e81313] pl-[1273px]">
        <div className="h-[4px] w-[2px] bg-white" />
        <div className="h-[4px] w-[2px] bg-white" />
        <div className="h-[4px] w-[2px] bg-white" />
      </div>

      <Ribbon />
      {/* scissors peeking out from behind the brown frame */}
      <svg className="absolute left-[158px] top-[283px]" width="14" height="36" viewBox="0 0 14 36">
        <path d="M10 1l2 16M12 20C4 20 2 28 5 33" fill="none" stroke="#6b8fc0" strokeWidth="3" />
      </svg>

      {/* orange band */}
      <div className="absolute left-[1px] top-[477px] h-[80px] w-[2001px] rounded-[18px] border-[3px] border-[#b0700f] bg-[#e48312]" />

      <Dialog />
      <FormatMenu />

      {/* black frame round the Conditional Formatting button */}
      <div className="absolute left-[1654px] top-[237px] h-[242px] w-[310px] border-x-[33px] border-y-[34px] border-black bg-white">
        <div className="ml-[11px] flex h-full w-[138px] flex-col overflow-hidden whitespace-nowrap border-l border-[#e4e4e4] text-[26.5px] text-[#444] blur-[0.4px]">
          <div className="ml-[55px] mt-[17px] shrink-0">
            <CfIcon />
          </div>
          <span className="ml-[20px] mt-[7px] leading-[35px]">Conditional</span>
          <span className="ml-[13px] leading-[35px]">Formatting</span>
        </div>
      </div>

      <Arrows />

      {/* brown frame round HOME */}
      <div className="absolute left-[170px] top-[203px] h-[140px] w-[173px] border-[3px] border-[#a66413]">
        <div className="h-[134px] w-[167px] border-x-[14px] border-y-[16px] border-[#53412b]">
          <div className="h-full w-full border-[3px] border-[#b36c14]" />
        </div>
      </div>

      {/* footer */}
      <div className="absolute inset-x-0 top-[1418px] flex h-[118px] flex-col">
        <div className="h-[15px] bg-[#e48312]" />
        <div className="flex-1 bg-[#b85a2b]" />
      </div>
    </div>
  )
}
